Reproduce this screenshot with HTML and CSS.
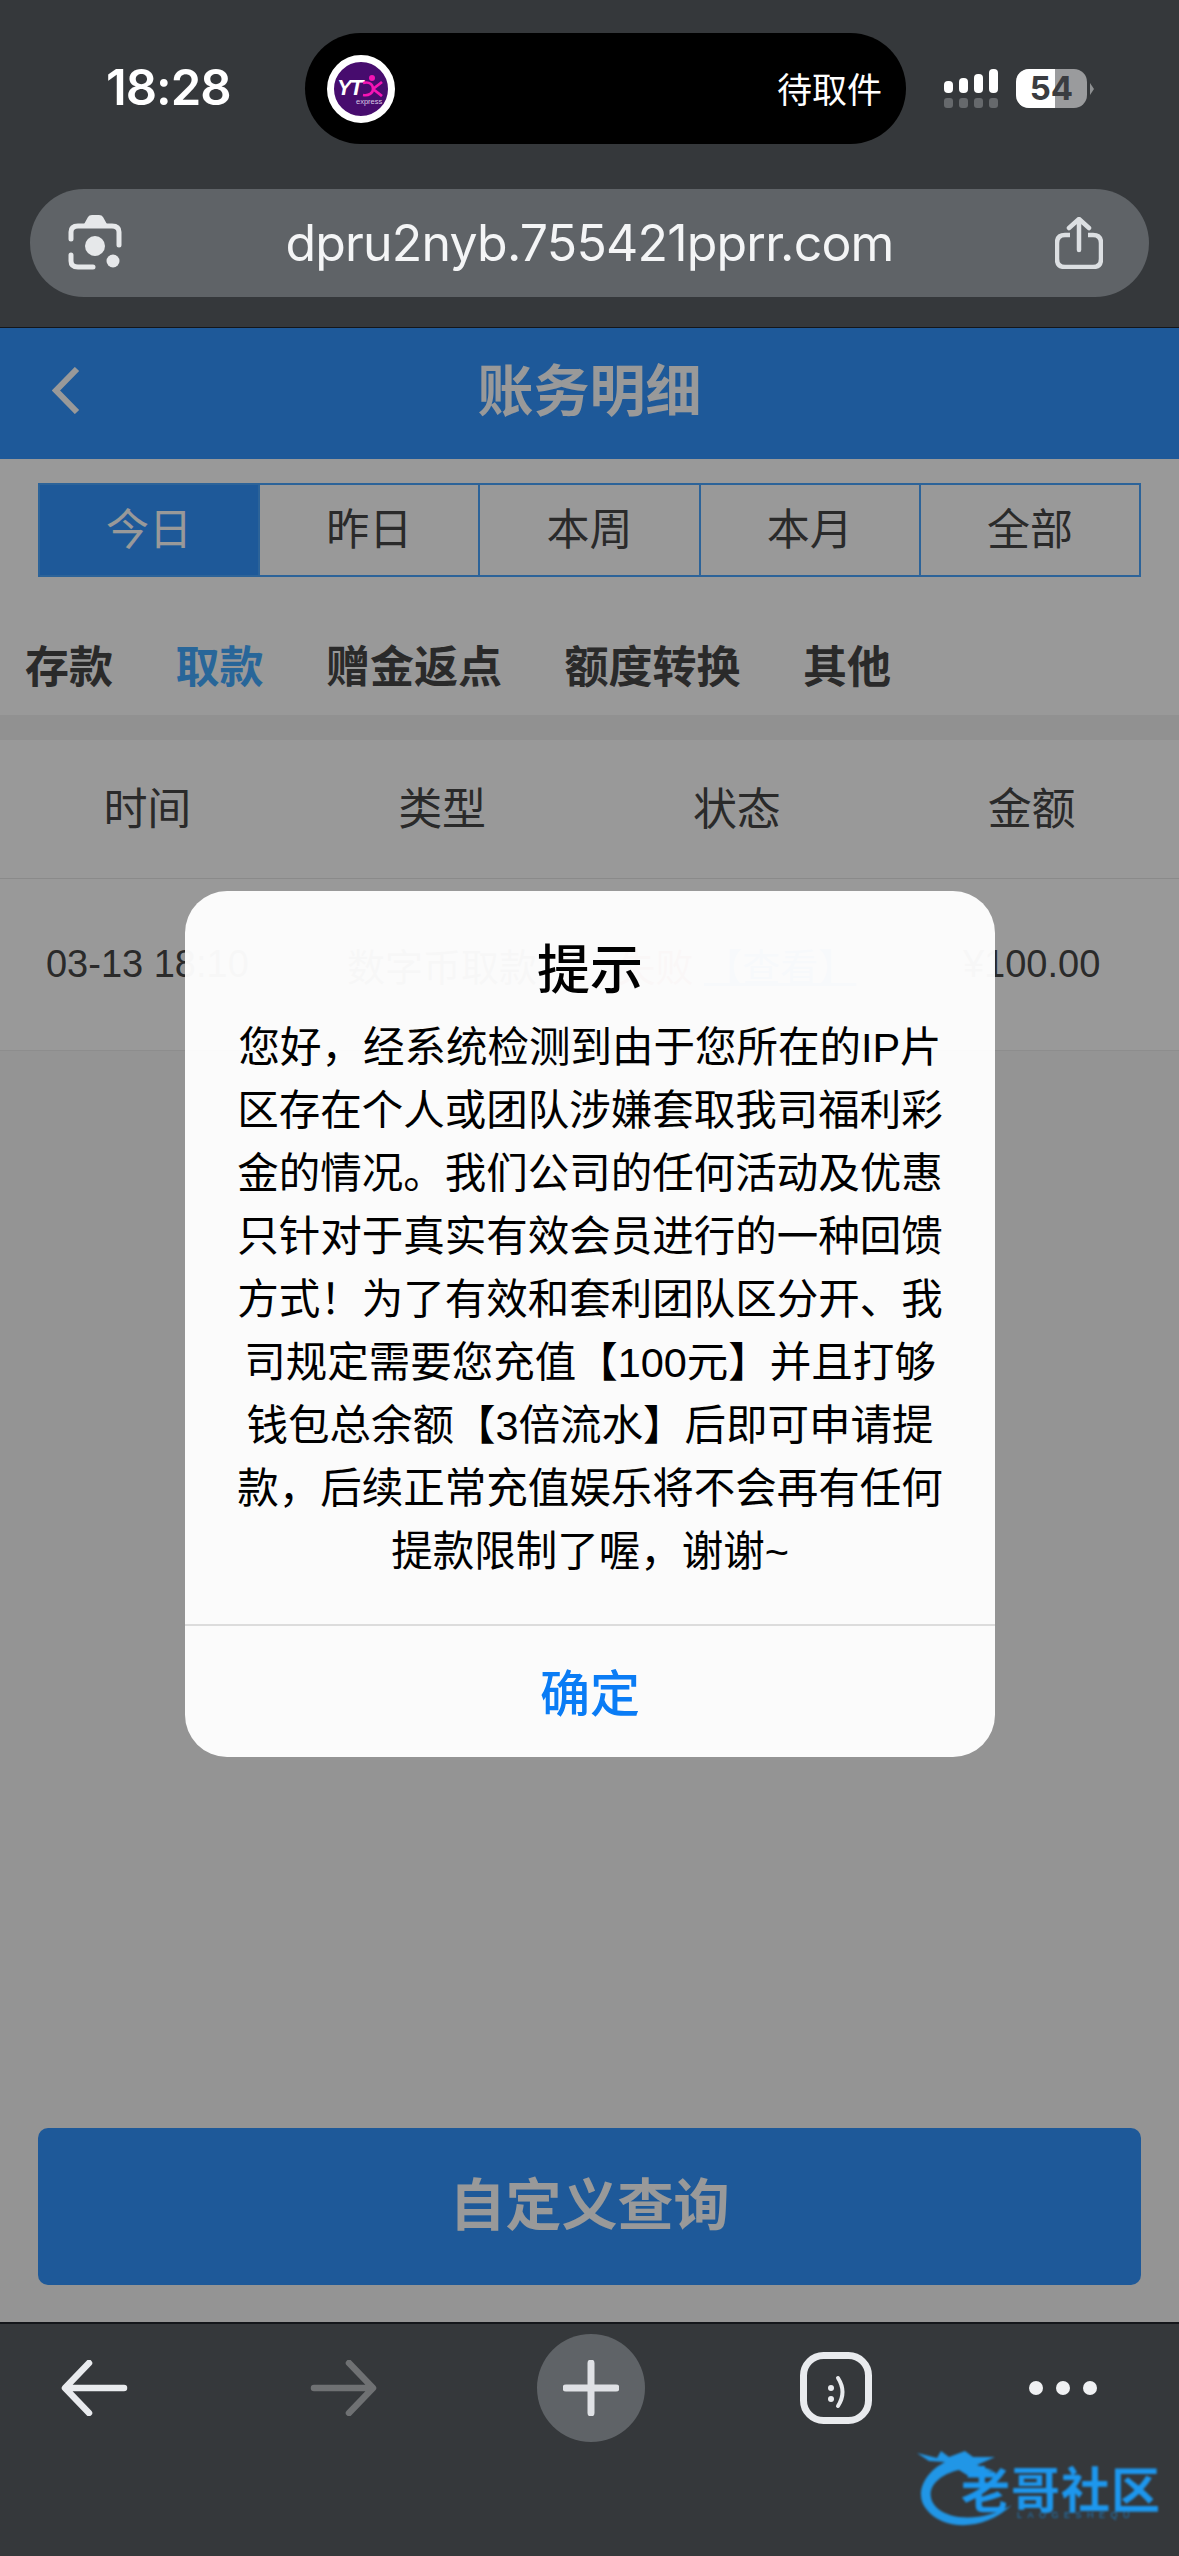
FILE: index.html
```html
<!DOCTYPE html>
<html lang="zh-CN">
<head>
  <meta charset="UTF-8">
  <title>账务明细</title>
  <link rel="stylesheet" href="styles.css">
</head>
<body>
  <div class="browser-top">
    <div class="status-bar">
      <span class="time">18:28</span>
      <div class="island">
        <div class="island-logo">
          <span class="logo-yt">YT</span>
          <svg class="logo-mark" viewBox="0 0 21 22">
            <circle cx="10" cy="3" r="3" fill="#f514b4"/>
            <path d="M1 8 C8 6 11 10 11 14 C11 18 7 21 1 20" fill="none" stroke="#f514b4" stroke-width="2.600"/>
            <path d="M11 14 L20 7 M11 14 L20 21" fill="none" stroke="#f514b4" stroke-width="2.800"/>
          </svg>
          <span class="logo-sub">express</span>
        </div>
        <span class="island-text">待取件</span>
      </div>
      <svg class="signal" viewBox="0 0 54 39">
        <rect x="0" y="12" width="9" height="12" rx="4" fill="#fff"/>
        <rect x="15" y="9" width="9" height="15" rx="4" fill="#fff"/>
        <rect x="30" y="5" width="9" height="19" rx="4" fill="#fff"/>
        <rect x="45" y="0" width="9" height="24" rx="4" fill="#fff"/>
        <rect x="0" y="29" width="9" height="10" rx="3" fill="#66696c"/>
        <rect x="15" y="29" width="9" height="10" rx="3" fill="#66696c"/>
        <rect x="30" y="29" width="9" height="10" rx="3" fill="#66696c"/>
        <rect x="45" y="29" width="9" height="10" rx="3" fill="#66696c"/>
      </svg>
      <div class="battery">
        <div class="battery-fill"></div>
        <span class="battery-num">54</span>
      </div>
      <div class="battery-nub"></div>
    </div>
    <div class="url-bar">
      <svg class="url-icon" width="56" height="56" viewBox="0 0 56 56">
        <path d="M15 11 L20 2 Q21 0 24 0 H31 Q34 0 35 2 L40 11 Z" fill="#e6e8ea"/>
        <path d="M3 24 V17 Q3 11 10 11 H44 Q51 11 51 17 V30" fill="none" stroke="#e6e8ea" stroke-width="5" stroke-linecap="round"/>
        <path d="M3 40 V46 Q3 52 10 52 H25" fill="none" stroke="#e6e8ea" stroke-width="5" stroke-linecap="round"/>
        <circle cx="27" cy="31" r="10" fill="#e6e8ea"/>
        <circle cx="45" cy="46" r="6.500" fill="#e6e8ea"/>
      </svg>
      <span class="url-text">dpru2nyb.755421pprr.com</span>
      <svg class="url-icon" width="48" height="52" viewBox="0 0 48 52">
        <path d="M15 18 H10 Q2 18 2 26 V42 Q2 50 10 50 H38 Q46 50 46 42 V26 Q46 18 38 18 H33" fill="none" stroke="#dcdfe2" stroke-width="4.500"/>
        <path d="M24 33 V3 M14 11 L24 2 L34 11" fill="none" stroke="#dcdfe2" stroke-width="4.500" stroke-linecap="round" stroke-linejoin="round"/>
      </svg>
    </div>
  </div>

  <div class="page">
    <header class="app-header">
      <svg class="back" width="28" height="47" viewBox="0 0 28 47"><path d="M25 2 L4 23.500 L25 45" fill="none" stroke="#fff" stroke-width="6"/></svg>
      <h1 class="app-title">账务明细</h1>
    </header>

    <div class="records">
      <div class="range-tabs">
        <div class="range-tab active">今日</div>
        <div class="range-tab">昨日</div>
        <div class="range-tab">本周</div>
        <div class="range-tab">本月</div>
        <div class="range-tab">全部</div>
      </div>

      <nav class="type-nav">
        <span>存款</span>
        <span class="current">取款</span>
        <span>赠金返点</span>
        <span>额度转换</span>
        <span>其他</span>
      </nav>

      <div class="band"></div>

      <div class="record-head">
        <span>时间</span>
        <span>类型</span>
        <span>状态</span>
        <span>金额</span>
      </div>
      <div class="record-row">
        <span>03-13 18:10</span>
        <span>数字币取款</span>
        <span><em class="fail">失败</em> <a class="view">【查看】</a></span>
        <span>¥100.00</span>
      </div>
    </div>

    <div class="query-wrap">
      <button class="query-btn">自定义查询</button>
    </div>

    <div class="overlay"></div>
    <div class="dialog">
      <h2 class="dialog-title">提示</h2>
      <p class="dialog-body">您好，经系统检测到由于您所在的IP片<br>区存在个人或团队涉嫌套取我司福利彩<br>金的情况。我们公司的任何活动及优惠<br>只针对于真实有效会员进行的一种回馈<br>方式！为了有效和套利团队区分开、我<br>司规定需要您充值【100元】并且打够<br>钱包总余额【3倍流水】后即可申请提<br>款，后续正常充值娱乐将不会再有任何<br>提款限制了喔，谢谢~</p>
      <div class="dialog-btn">确定</div>
    </div>
  </div>

  <div class="toolbar">
    <svg width="68" height="56" viewBox="0 0 68 56"><path d="M63 28 H5 M28 3 L4 28 L28 53" fill="none" stroke="#e9ebee" stroke-width="6.500" stroke-linecap="round" stroke-linejoin="round"/></svg>
    <svg width="68" height="56" viewBox="0 0 68 56"><path d="M5 28 H63 M40 3 L64 28 L40 53" fill="none" stroke="#6f7173" stroke-width="6.500" stroke-linecap="round" stroke-linejoin="round"/></svg>
    <div class="plus-btn">
      <svg width="56" height="56" viewBox="0 0 56 56"><path d="M28 3 V53 M3 28 H53" fill="none" stroke="#dfe1e5" stroke-width="7" stroke-linecap="round"/></svg>
    </div>
    <svg class="tab-btn" width="72" height="72" viewBox="0 0 72 72">
      <rect x="3.500" y="3.500" width="65" height="65" rx="20" fill="none" stroke="#e9ebee" stroke-width="7"/>
      <circle cx="31" cy="36" r="3" fill="#e9ebee"/>
      <circle cx="31" cy="47" r="3" fill="#e9ebee"/>
      <path d="M38 26 Q47 40 38 54" fill="none" stroke="#e9ebee" stroke-width="4" stroke-linecap="round"/>
    </svg>
    <div class="more-btn"><i></i><i></i><i></i></div>
  </div>

  <div class="watermark">
    <svg class="wm-dragon" width="130" height="96" viewBox="0 0 130 96">
      <path d="M0 9 L20 14 L24 7 L32 13 L48 7 L56 13 L78 13 L60 21 L77 27 L50 31 L42 26 C16 32 6 50 20 64 C36 78 70 76 95 61 C66 88 26 86 10 66 C-4 50 8 28 28 18 L12 17 Z" fill="#2196e6"/>
    </svg>
    <span class="wm-name">老哥社区</span>
    <span class="wm-sub">LAOGESHEQU</span>
  </div>
</body>
</html>
```

FILE: styles.css
```css
* {
  box-sizing: border-box;
}

html, body {
  margin: 0;
  padding: 0;
}

body {
  width: 1179px;
  height: 2556px;
  display: flex;
  flex-direction: column;
  position: relative;
  overflow: hidden;
  font-family: "Liberation Sans", "Noto Sans CJK SC", sans-serif;
  background: #35383b;
  color: #464646;
}

/* browser chrome */
.browser-top {
  height: 328px;
  background: #35383b;
  border-bottom: 1px solid #14161a;
  padding-top: 33px;
}

.status-bar {
  height: 111px;
  display: flex;
  align-items: center;
  padding-left: 106px;
}

.time {
  width: 199px;
  font-size: 49px;
  font-weight: 600;
  color: #fff;
  font-family: Inter, sans-serif;
  letter-spacing: -1px;
  margin-top: -2px;
}

.island {
  width: 601px;
  height: 111px;
  background: #000;
  border-radius: 56px;
  display: flex;
  align-items: center;
  justify-content: space-between;
  padding: 0 24px 0 22px;
}

.island-logo {
  width: 68px;
  height: 68px;
  border-radius: 50%;
  background: #470c6e;
  border: 7px solid #fff;
  position: relative;
}

.logo-yt {
  position: absolute;
  left: 3px;
  top: 16px;
  font-size: 22px;
  line-height: 20px;
  font-weight: 700;
  font-style: italic;
  color: #fff;
  letter-spacing: -2px;
}

.logo-mark {
  position: absolute;
  left: 28px;
  top: 13px;
  width: 21px;
  height: 22px;
}

.logo-sub {
  position: absolute;
  left: 22px;
  top: 36px;
  font-size: 7.5px;
  line-height: 8px;
  color: #d9c8e4;
}

.island-text {
  font-size: 35px;
  color: #fff;
  margin-top: -3px;
}

.signal {
  width: 54px;
  height: 39px;
  margin-left: 38px;
}

.battery {
  width: 71px;
  height: 39px;
  margin-left: 18px;
  border-radius: 13px;
  background: #9a9b9d;
  overflow: hidden;
  position: relative;
  text-align: center;
}

.battery-fill {
  position: absolute;
  left: 0;
  top: 0;
  bottom: 0;
  width: 39px;
  background: #fff;
}

.battery-num {
  position: relative;
  font-size: 33px;
  line-height: 39px;
  font-weight: 700;
  color: #3a3c40;
  font-family: Inter, sans-serif;
}

.battery-nub {
  width: 0;
  height: 0;
  margin-left: 3px;
  border-left: 4px solid #8e9092;
  border-top: 6px solid transparent;
  border-bottom: 6px solid transparent;
}

.url-bar {
  margin: 45px 30px 0;
  height: 108px;
  background: #5f6367;
  border-radius: 54px;
  display: flex;
  align-items: center;
  justify-content: space-between;
  padding: 0 46px 0 38px;
}

.url-icon {
  flex: none;
}

.url-text {
  font-size: 50px;
  color: #f4f5f6;
  font-family: Inter, sans-serif;
  font-weight: 400;
  letter-spacing: -.8px;
}

/* page */
.page {
  flex: 1;
  position: relative;
  display: flex;
  flex-direction: column;
  background: #f7f7f7;
}

.app-header {
  height: 131px;
  padding-bottom: 14px;
  background: #3295ff;
  display: flex;
  align-items: center;
  justify-content: center;
  position: relative;
}

.back {
  position: absolute;
  left: 52px;
  top: 39px;
}

.app-title {
  margin: 0;
  font-size: 56px;
  font-weight: 700;
  color: #fff;
}

.records {
  background: #fff;
  padding-top: 24px;
}

.range-tabs {
  margin: 0 38px;
  height: 94px;
  display: flex;
  border: 2px solid #4aa5ff;
}

.range-tab {
  flex: 1;
  display: flex;
  align-items: center;
  justify-content: center;
  padding-bottom: 8px;
  font-size: 43px;
  border-left: 2px solid #4aa5ff;
}

.range-tab:first-child {
  border-left: 0;
}

.range-tab.active {
  background: #3295ff;
  color: #fff;
}

.type-nav {
  height: 138px;
  display: flex;
  align-items: center;
  gap: 62.5px;
  padding: 36px 0 0 25px;
  font-size: 44px;
  font-weight: 700;
}

.type-nav .current {
  color: #44aaff;
}

.band {
  height: 25px;
  background: #f2f2f2;
}

.record-head,
.record-row {
  display: grid;
  grid-template-columns: repeat(4, 1fr);
  text-align: center;
  align-items: center;
}

.record-head {
  height: 139px;
  padding-bottom: 6px;
  font-size: 44px;
  border-bottom: 1px solid #e6e6e6;
}

.record-row {
  height: 172px;
  font-size: 38px;
  border-bottom: 1px solid #ececec;
}

.fail {
  font-style: normal;
  color: #e04444;
}

.view {
  color: #3295ff;
  text-decoration: underline;
}

.query-wrap {
  margin-top: auto;
  padding: 0 38px 37px;
}

.query-btn {
  display: block;
  width: 100%;
  height: 157px;
  padding-bottom: 14px;
  border: 0;
  border-radius: 10px;
  background: #3295ff;
  color: #fff;
  font-family: inherit;
  font-size: 56px;
  font-weight: 700;
}

/* dialog */
.overlay {
  position: absolute;
  left: 0;
  top: 0;
  right: 0;
  bottom: 0;
  background: rgba(0, 0, 0, .4);
}

.dialog {
  position: absolute;
  left: 185px;
  top: 563px;
  width: 810px;
  height: 866px;
  border-radius: 42px;
  background: rgba(254, 254, 254, .97);
  color: #000;
  text-align: center;
  display: flex;
  flex-direction: column;
}

.dialog-title {
  margin: 50px 0 0;
  height: 60px;
  font-size: 53px;
  line-height: 60px;
  font-weight: 500;
}

.dialog-body {
  margin: 15px 0 0;
  font-size: 41.5px;
  line-height: 63px;
  white-space: nowrap;
}

.dialog-btn {
  margin-top: auto;
  height: 133px;
  padding-bottom: 4px;
  border-top: 2px solid #dcdcdc;
  display: flex;
  align-items: center;
  justify-content: center;
  font-size: 50px;
  font-weight: 500;
  color: #0a7cf5;
}

/* bottom bar */
.toolbar {
  height: 234px;
  background: #35383b;
  border-top: 2px solid #14161a;
  display: flex;
  align-items: flex-start;
  padding: 10px 0 0 61px;
}

.toolbar > svg {
  margin-top: 26px;
}

.toolbar > svg + svg {
  margin-left: 180px;
}

.plus-btn {
  width: 108px;
  height: 108px;
  margin-left: 160px;
  border-radius: 50%;
  background: #5f6367;
  display: flex;
  align-items: center;
  justify-content: center;
}

.toolbar > .tab-btn {
  margin: 18px 0 0 155px;
}

.more-btn {
  display: flex;
  gap: 13px;
  margin: 47px 0 0 157px;
}

.more-btn i {
  width: 14px;
  height: 14px;
  border-radius: 50%;
  background: #f0f1f3;
}

/* watermark sits on top of the bar */
.watermark {
  position: absolute;
  left: 917px;
  top: 2444px;
  width: 250px;
  height: 85px;
  filter: blur(.8px);
}

.wm-dragon {
  position: absolute;
  left: 0;
  top: 0;
}

.wm-name {
  position: absolute;
  left: 44px;
  top: 28px;
  font-size: 49px;
  line-height: 38px;
  font-weight: 700;
  letter-spacing: 1px;
  white-space: nowrap;
  color: #1d97ee;
}

.wm-sub {
  position: absolute;
  left: 100px;
  top: 67px;
  font-size: 9px;
  line-height: 9px;
  letter-spacing: 5.5px;
  white-space: nowrap;
  color: #1e7cc0;
}
```
